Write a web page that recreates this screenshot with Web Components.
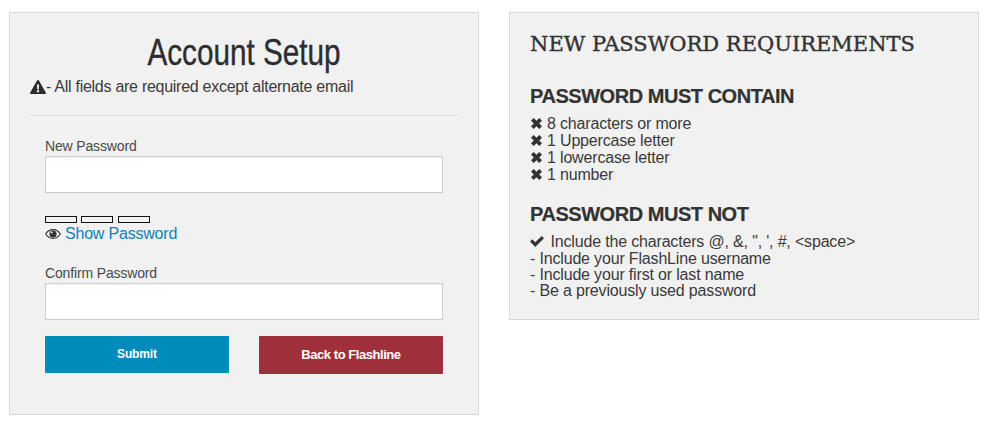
<!DOCTYPE html>
<html lang="en">
<head>
<meta charset="utf-8">
<title>Account Setup</title>
<style>
	html, body { margin: 0; background: #fff; }
	body {
		padding: 12px 8px 0 9px;
		font-family: "Liberation Sans", Arial, sans-serif;
		color: #333;
	}
	#page { display: flex; align-items: flex-start; gap: 30px; }
</style>
</head>
<body>
<div id="page">
	<setup-panel style="height: 403px">
		<setup-form></setup-form>
	</setup-panel>
	<setup-panel style="height: 308px">
		<password-rules></password-rules>
	</setup-panel>
</div>

<script>
const ICONS = {
	warning: `<svg viewBox="0 0 16 14" width="16" height="14"><path fill="currentColor" fill-rule="evenodd" d="M8 0c.4 0 .7.2.9.6l6.900 11.800c.4.7-.1 1.600-.9 1.600H1.100c-.8 0-1.300-.9-.9-1.600L7.100.6C7.300.2 7.600 0 8 0zM6.900 4.400l.3 5h1.600l.3-5zM6.900 10.300v2h2.200v-2z"/></svg>`,
	eye: `<svg viewBox="0 0 16 10" width="16" height="10"><path fill="none" stroke="currentColor" stroke-width="1.100" d="M.7 5C2.400 2.200 5 .6 8 .6s5.600 1.600 7.300 4.400C13.600 7.800 11 9.400 8 9.400S2.400 7.800.7 5z"/><path fill="currentColor" fill-rule="evenodd" d="M8 1.400a3.600 3.600 0 1 1 0 7.200 3.600 3.600 0 0 1 0-7.200zM6.600 2.600a1 1 0 1 0 0 2 1 1 0 0 0 0-2z"/></svg>`,
	cross: `<svg viewBox="0 0 11 11" width="11" height="11"><path fill="currentColor" d="M2.700 0 5.500 2.800 8.300 0 11 2.700 8.200 5.500 11 8.300 8.300 11 5.500 8.200 2.700 11 0 8.300 2.800 5.500 0 2.700z"/></svg>`,
	check: `<svg viewBox="0 0 14 11" width="14" height="11"><path fill="currentColor" d="M2.200 3.200 5.200 6.200 11.800 0 14 2.200 5.200 11 0 5.400z"/></svg>`
};

class SetupPanel extends HTMLElement {
	static Register() {
		customElements.define("setup-panel", SetupPanel);
	}

	constructor() {
		super();
		this.attachShadow({ mode: "open" });
		this.shadowRoot.innerHTML = `
		<style>
			:host {
				display: block;
				box-sizing: border-box;
				flex: none;
				width: 470px;
				background: #f1f1f1;
				border: 1px solid #d8d8d8;
			}
		</style>
		<slot></slot>
	`;
	}
}

class PasswordField extends HTMLElement {
	static Register() {
		customElements.define("password-field", PasswordField);
	}

	constructor() {
		super();
		this.attachShadow({ mode: "open" });
		this.shadowRoot.innerHTML = `
		<style>
			:host { display: block; }
			label {
				display: block;
				font-size: 14px;
				line-height: 16px;
				letter-spacing: -0.15px;
				color: #4a4a4a;
				margin-bottom: 2px;
			}
			input {
				display: block;
				box-sizing: border-box;
				width: 100%;
				height: 37px;
				margin: 0;
				background: #fff;
				border: 1px solid #ccc;
				box-shadow: inset 0 1px 2px rgba(0, 0, 0, 0.06);
				outline: 0;
			}
		</style>
		<label for="f"></label>
		<input id="f" type="password">
	`;
		this.shadowRoot.querySelector("label").textContent = this.getAttribute("label");
	}
}

class SetupButton extends HTMLElement {
	static Register() {
		customElements.define("setup-button", SetupButton);
	}

	constructor() {
		super();
		this.attachShadow({ mode: "open" });
		this.shadowRoot.innerHTML = `
		<style>
			:host { display: block; }
			button {
				display: block;
				width: 184px;
				height: var(--h, 37px);
				padding: 0 0 2px;
				border: 0;
				border-radius: 1px;
				background: var(--bg);
				color: #fff;
				font: bold var(--fs, 12px) "Liberation Sans", Arial, sans-serif;
				letter-spacing: var(--ls, -0.12px);
			}
		</style>
		<button type="button"><slot></slot></button>
	`;
	}
}

class SetupForm extends HTMLElement {
	static Register() {
		customElements.define("setup-form", SetupForm);
	}

	constructor() {
		super();
		this.attachShadow({ mode: "open" });
		this.shadowRoot.innerHTML = `
		<style>
			:host { display: block; padding: 20px 20px 0; }
			h1 {
				margin: 0;
				text-align: center;
				font: 400 36px/40px "Liberation Sans", sans-serif;
				-webkit-text-stroke: 0.35px #2d2d2d;
				color: #2d2d2d;
				transform: scaleX(0.825);
			}
			.note {
				display: flex;
				align-items: center;
				font-size: 16px;
				line-height: 20px;
				letter-spacing: -0.27px;
				margin-top: 4px;
				color: #3a3a3a;
			}
			.note svg { display: block; flex: none; margin-top: -1px; color: #2b2b2b; }
			hr { height: 1px; border: 0; margin: 18px 0 0; background: #dedede; }
			.fields { padding: 22px 15px 0; }
			.meter { display: flex; gap: 4px; margin-top: 23px; }
			.meter i { display: block; box-sizing: border-box; width: 32px; height: 7px; border: 1px solid #111; }
			.meter i:last-child { margin-left: 1px; }
			.show { display: flex; align-items: center; gap: 4px; height: 20px; margin-top: 1px; font-size: 16px; letter-spacing: -0.2px; }
			.show svg { display: block; color: #333; }
			.show a { color: #0a83b5; text-decoration: none; }
			.confirm { margin-top: 21px; }
			.buttons { display: flex; justify-content: space-between; align-items: flex-start; margin-top: 16px; }
		</style>
		<h1>Account Setup</h1>
		<div class="note">${ICONS.warning}<span>- All fields are required except alternate email</span></div>
		<hr>
		<div class="fields">
			<password-field label="New Password"></password-field>
			<div class="meter"><i></i><i></i><i></i></div>
			<div class="show">${ICONS.eye}<a href="#">Show Password</a></div>
			<password-field class="confirm" label="Confirm Password"></password-field>
			<div class="buttons">
				<setup-button style="--bg: #008cba">Submit</setup-button>
				<setup-button style="--bg: #9e2f3b; --h: 38px; --fs: 13px; --ls: -0.45px">Back to Flashline</setup-button>
			</div>
		</div>
	`;
	}
}

class PasswordRules extends HTMLElement {
	static Register() {
		customElements.define("password-rules", PasswordRules);
	}

	constructor() {
		super();
		this.attachShadow({ mode: "open" });
		this.shadowRoot.innerHTML = `
		<style>
			:host { display: block; padding: 18px 20px 0; }
			h2 {
				margin: 0;
				font: 400 21px/26px "DejaVu Serif", serif;
				-webkit-text-stroke: 0.4px #333;
				color: #333;
			}
			h3 {
				margin: 0;
				font: bold 20px/24px "Liberation Sans", Arial, sans-serif;
				letter-spacing: -0.46px;
				-webkit-text-stroke: 0.2px #333;
				color: #333;
			}
			.contain { margin-top: 27px; }
			.not { margin-top: 19px; }
			ul {
				list-style: none;
				margin: 7px 0 0;
				padding: 0;
				font-size: 16px;
				line-height: 17px;
				letter-spacing: -0.17px;
				color: #3a3a3a;
			}
			.tight li:nth-child(n + 3) { line-height: 16px; }
			li { display: flex; align-items: center; white-space: pre; }
			li svg { display: block; flex: none; color: #333; }
			li svg.x { margin: 0 5px 0 1px; }
			li svg.v { margin-right: 6.500px; }
		</style>
		<h2>NEW PASSWORD REQUIREMENTS</h2>
		<h3 class="contain">PASSWORD MUST CONTAIN</h3>
		<ul>
			<li>${ICONS.cross}<span>8 characters or more</span></li>
			<li>${ICONS.cross}<span>1 Uppercase letter</span></li>
			<li>${ICONS.cross}<span>1 lowercase letter</span></li>
			<li>${ICONS.cross}<span>1 number</span></li>
		</ul>
		<h3 class="not">PASSWORD MUST NOT</h3>
		<ul class="tight">
			<li>${ICONS.check}<span>Include the characters @, &amp;, ", ', #, &lt;space&gt;</span></li>
			<li>- Include your FlashLine username</li>
			<li>- Include your first or last name</li>
			<li>- Be a previously used password</li>
		</ul>
	`;
		this.shadowRoot.querySelectorAll("li svg").forEach((svg) => {
			svg.classList.add(svg.getAttribute("viewBox") === "0 0 11 11" ? "x" : "v");
		});
	}
}

SetupPanel.Register();
PasswordField.Register();
SetupButton.Register();
SetupForm.Register();
PasswordRules.Register();
</script>
</body>
</html>
